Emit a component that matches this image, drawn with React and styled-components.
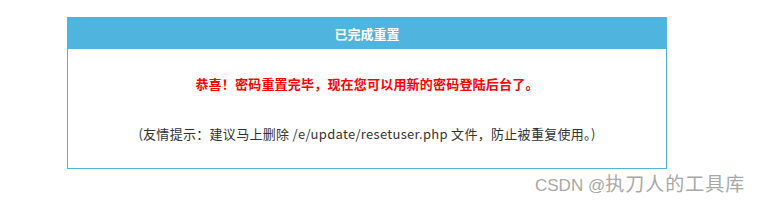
import React from 'react';
import styled, { createGlobalStyle } from 'styled-components';

const GlobalStyle = createGlobalStyle`
  html, body {
    margin: 0;
    padding: 0;
    background: #fff;
  }
  body {
    font-family: "Noto Sans CJK SC", "Noto Sans", sans-serif;
  }
`;

const Page = styled.div`
  position: relative;
  width: 759px;
  height: 202px;
  padding: 17px 0 0 67px;
  box-sizing: border-box;
`;

const Panel = styled.div`
  width: 600px;
  border: 1px solid #4fb4de;
  box-sizing: border-box;
`;

const PanelHeader = styled.div`
  height: 31px;
  line-height: 31px;
  background: #4fb4de;
  color: #fff;
  font-size: 13px;
  font-weight: bold;
  text-align: center;
`;

const PanelBody = styled.div`
  display: flex;
  flex-direction: column;
  align-items: center;
  gap: 30px;
  padding: 25px 0 24px;
`;

const Message = styled.p`
  margin: 0;
  line-height: 20px;
  font-size: 13px;
  letter-spacing: ${({ $spacing = 0 }) => $spacing}px;
  font-weight: ${({ $strong }) => ($strong ? 'bold' : 'normal')};
  color: ${({ $color }) => $color};
`;

const Watermark = styled.div`
  position: absolute;
  left: 535px;
  top: 173px;
  font-family: "Liberation Sans", "Noto Sans CJK SC", sans-serif;
  font-size: 17px;
  line-height: 20px;
  color: #a8a8a8;
  white-space: nowrap;
`;

const Spaced = styled.span`
  font-family: "Noto Sans CJK SC", sans-serif;
  font-size: 19px;
  letter-spacing: 1px;
`;

export default function App() {
  return (
    <>
      <GlobalStyle />
      <Page>
        <Panel>
          <PanelHeader>已完成重置</PanelHeader>
          <PanelBody>
            <Message $strong $color="#f00" $spacing={0.2}>
              恭喜！密码重置完毕，现在您可以用新的密码登陆后台了。
            </Message>
            <Message $color="#333" $spacing={0.3}>
              (友情提示：建议马上删除 /e/update/resetuser.php 文件，防止被重复使用。)
            </Message>
          </PanelBody>
        </Panel>
        <Watermark>
          CSDN @<Spaced>执刀人的工具库</Spaced>
        </Watermark>
      </Page>
    </>
  );
}
